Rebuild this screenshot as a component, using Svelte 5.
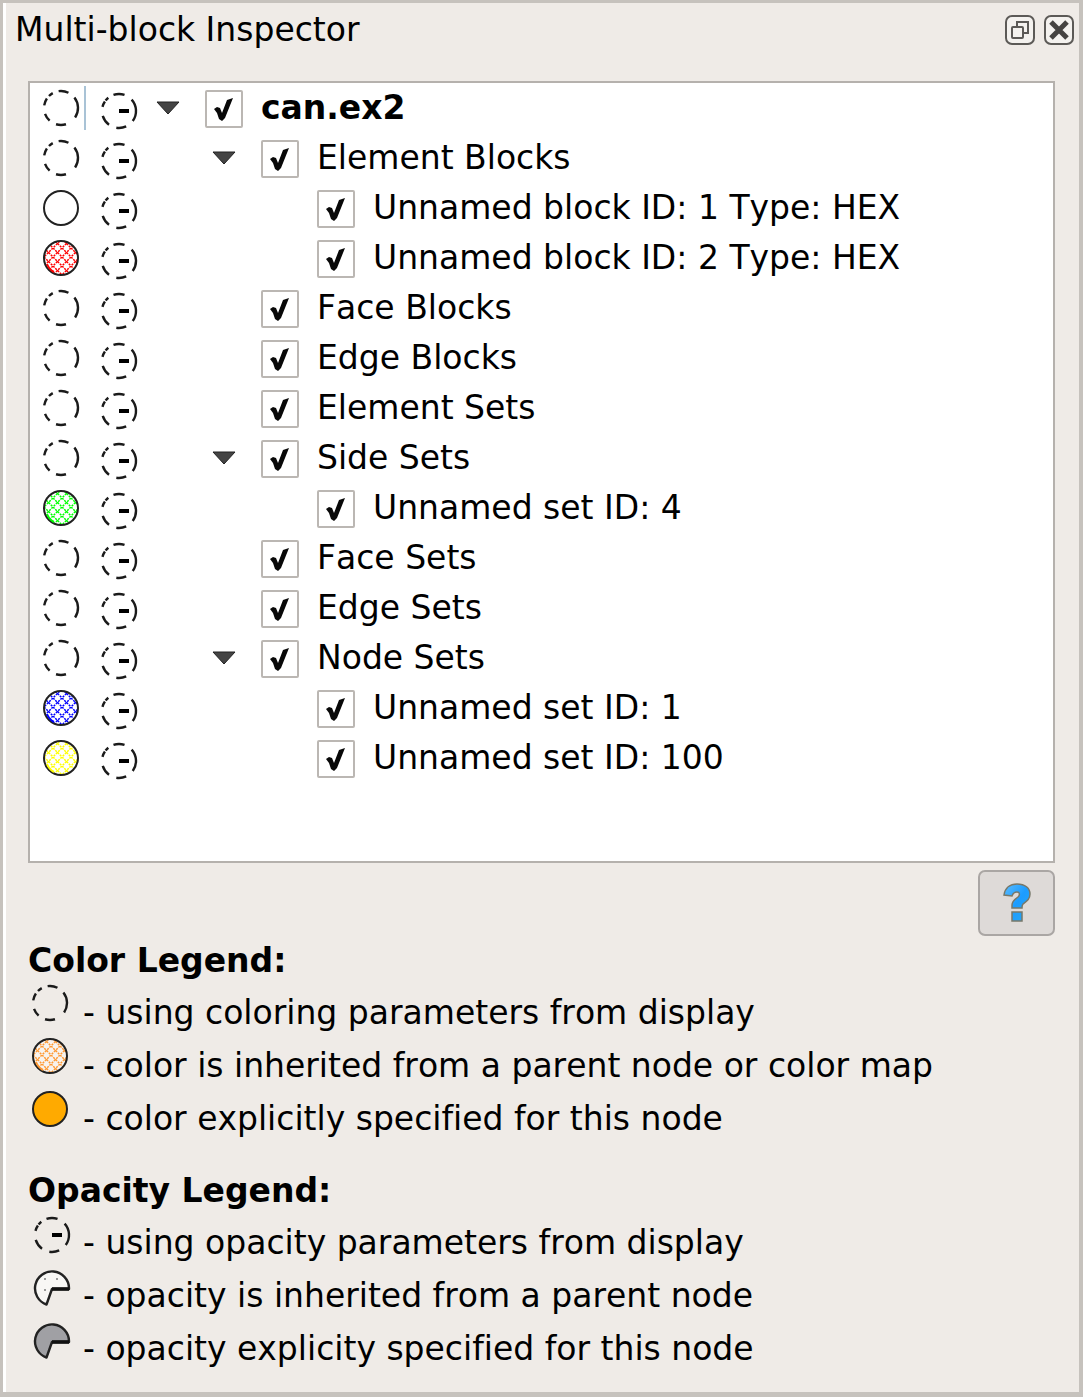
<script>
  let rows = $state([
    { label: 'can.ex2', depth: 0, open: true, checked: true, color: 'none', root: true },
    { label: 'Element Blocks', depth: 1, open: true, checked: true, color: 'none' },
    { label: 'Unnamed block ID: 1 Type: HEX', depth: 2, checked: true, color: '#ffffff' },
    { label: 'Unnamed block ID: 2 Type: HEX', depth: 2, checked: true, color: '#ff0000' },
    { label: 'Face Blocks', depth: 1, checked: true, color: 'none' },
    { label: 'Edge Blocks', depth: 1, checked: true, color: 'none' },
    { label: 'Element Sets', depth: 1, checked: true, color: 'none' },
    { label: 'Side Sets', depth: 1, open: true, checked: true, color: 'none' },
    { label: 'Unnamed set ID: 4', depth: 2, checked: true, color: '#00ff00' },
    { label: 'Face Sets', depth: 1, checked: true, color: 'none' },
    { label: 'Edge Sets', depth: 1, checked: true, color: 'none' },
    { label: 'Node Sets', depth: 1, open: true, checked: true, color: 'none' },
    { label: 'Unnamed set ID: 1', depth: 2, checked: true, color: '#0000ff' },
    { label: 'Unnamed set ID: 100', depth: 2, checked: true, color: '#ffff00' }
  ]);

  // A row is shown when every ancestor above it is open.
  const visible = $derived.by(() => {
    let limit = Infinity;
    return rows.filter((row) => {
      if (row.depth > limit) return false;
      limit = row.open === false ? row.depth : Infinity;
      return true;
    });
  });

  function arcs(list) {
    const at = (deg) => {
      const t = (deg * Math.PI) / 180;
      return `${(20 + 17 * Math.cos(t)).toFixed(2)} ${(20 + 17 * Math.sin(t)).toFixed(2)}`;
    };
    return list.map(([a, b]) => `M${at(a)}A17 17 0 0 1 ${at(b)}`).join('');
  }

  const colorDashes = arcs([[-38, 34], [73, 107], [132, 160], [189, 214], [225, 241], [262, 296]]);
  const opacityDashes = arcs([[-42, 36], [65, 99], [126, 163], [194, 214], [218, 231], [251, 289]]);
  const pie = 'M37 20A17 17 0 1 0 14.500 36.500L20 21H37Z';
</script>

{#snippet colorIcon(color, solid)}
  <svg class="icon" viewBox="0 0 40 40" aria-hidden="true">
    {#if color === 'none'}
      <path class="dash" d={colorDashes} />
    {:else if solid || color === '#ffffff'}
      <circle class="ring" cx="20" cy="20" r="17" fill={color} />
    {:else}
      {@const id = 'hatch' + color.slice(1)}
      <defs>
        <pattern {id} width="9" height="9" x="3" y="1" patternUnits="userSpaceOnUse">
          <path d="M0 0L9 9M9 0L0 9" stroke={color} stroke-width="1.500" stroke-dasharray="2.200 1" />
        </pattern>
      </defs>
      <circle class="back" cx="20" cy="20" r="17" />
      <circle class="ring" cx="20" cy="20" r="17" fill={`url(#${id})`} />
      <path d="M6 26A15.500 15.500 0 0 0 13 34" fill="none" stroke={color} stroke-width="2" />
    {/if}
  </svg>
{/snippet}

{#snippet opacityIcon(kind)}
  <svg class="icon" viewBox="0 0 40 40" aria-hidden="true">
    {#if kind === 'display'}
      <path class="dash" d={opacityDashes} />
      <path d="M20 20H30" stroke="#000" stroke-width="4" />
    {:else if kind === 'inherited'}
      <path class="pie" d={pie} fill="#f8f7f5" />
      <path class="notch" d="M20 21H37" />
      <path d="M12 11h2M24 11h2M12 22h2" stroke="#999" stroke-width="2" />
    {:else}
      <path class="pie" d={pie} fill="#a0a0a4" />
      <path class="notch" d="M20 21H37" />
    {/if}
  </svg>
{/snippet}

<main class="inspector">
  <header class="titlebar">
    <h1>Multi-block Inspector</h1>
    <div class="window-buttons">
      <button aria-label="Float panel">
        <svg viewBox="0 0 32 32" aria-hidden="true">
          <rect class="frame" x="2" y="2" width="28" height="28" rx="6" />
          <path class="line" d="M13 13V8H24V19H19" />
          <rect class="line" x="8" y="13" width="11" height="11" rx="1" />
        </svg>
      </button>
      <button aria-label="Close panel">
        <svg viewBox="0 0 32 32" aria-hidden="true">
          <rect class="frame" x="2" y="2" width="28" height="28" rx="6" />
          <path class="cross" d="M8 8L24 24M24 8L8 24" />
        </svg>
      </button>
    </div>
  </header>

  <section class="content">
    <ul class="tree" role="tree" aria-label="Blocks">
      {#each visible as row (row)}
        <li role="treeitem" aria-level={row.depth + 1} aria-expanded={row.open} aria-selected="false">
          <button class="color-cell" class:current={row.root} aria-label="Set color of {row.label}">
            {@render colorIcon(row.color, false)}
          </button>
          <button class="opacity-cell" aria-label="Set opacity of {row.label}">
            {@render opacityIcon('display')}
          </button>
          <span class="branch depth-{row.depth}">
            {#if row.open !== undefined}
              <button class="toggle" class:closed={!row.open} aria-label="Toggle {row.label}" onclick={() => (row.open = !row.open)}>
                <svg viewBox="0 0 26 14" aria-hidden="true">
                  <path d="M2 1H24L13 13Z" fill="#444" stroke="#222" />
                </svg>
              </button>
            {/if}
          </span>
          <label class:root={row.root}>
            <input type="checkbox" bind:checked={row.checked} />
            <span>{row.label}</span>
          </label>
        </li>
      {/each}
    </ul>

    <button class="help" aria-label="Help">
      <svg viewBox="0 0 30 42" aria-hidden="true">
        <defs>
          <linearGradient id="blue" x1="0" y1="0" x2="1" y2="1">
            <stop offset="0" stop-color="#5bbcff" />
            <stop offset="0.500" stop-color="#1c9cff" />
            <stop offset="1" stop-color="#28a8f4" />
          </linearGradient>
        </defs>
        <path
          d="M2 13C3 6 8 2 15 2C23 2 28 6 28 12C28 17 25 19 21 22C20 23 20 24 20 26H10V23C10 19 13 17 16 15C18 13 18 10 15 10C12 10 11 11 10 14ZM10 30H20V39H10Z"
          fill="url(#blue)"
          stroke="#77786a"
          stroke-width="1.500"
        />
      </svg>
    </button>

    <section class="legend">
      <h2>Color Legend:</h2>
      <ul>
        <li>{@render colorIcon('none', false)}<span>- using coloring parameters from display</span></li>
        <li>{@render colorIcon('#ff9933', false)}<span>- color is inherited from a parent node or color map</span></li>
        <li>{@render colorIcon('#ffaa00', true)}<span>- color explicitly specified for this node</span></li>
      </ul>
    </section>

    <section class="legend opacity">
      <h2>Opacity Legend:</h2>
      <ul>
        <li>{@render opacityIcon('display')}<span>- using opacity parameters from display</span></li>
        <li>{@render opacityIcon('inherited')}<span>- opacity is inherited from a parent node</span></li>
        <li>{@render opacityIcon('explicit')}<span>- opacity explicity specified for this node</span></li>
      </ul>
    </section>
  </section>
</main>

<style>
  :global(body) {
    margin: 0;
    background: #efebe7;
  }

  .inspector {
    box-sizing: border-box;
    min-height: 100vh;
    display: flex;
    flex-direction: column;
    border: solid #c6c2bd;
    border-width: 3px 4px 5px 3px;
    box-shadow: inset 3px 0 #fff;
    background: #efebe7;
    color: #000;
    font-family: 'DejaVu Sans', sans-serif;
    font-size: 33px;
    font-kerning: none;
    font-variant-ligatures: none;
    line-height: 50px;
  }

  h1,
  h2,
  ul {
    margin: 0;
    padding: 0;
    font-size: inherit;
    list-style: none;
  }

  button {
    margin: 0;
    padding: 0;
    border: 0;
    background: none;
  }

  svg {
    display: block;
  }

  .titlebar {
    display: flex;
    align-items: center;
    justify-content: space-between;
    padding: 2px 4px 26px 12px;
  }

  h1 {
    font-weight: 400;
  }

  .window-buttons {
    display: flex;
    gap: 7px;
  }

  .window-buttons svg {
    width: 32px;
    height: 32px;
  }

  .frame {
    fill: #f4f2ef;
    stroke: #5c5a57;
    stroke-width: 2;
  }

  .line {
    fill: #f4f2ef;
    stroke: #5c5a57;
    stroke-width: 2;
  }

  .cross {
    stroke: #454341;
    stroke-width: 5;
  }

  .content {
    flex: 1;
    display: flex;
    flex-direction: column;
    padding: 0 24px 17px 25px;
  }

  .tree {
    flex: 1;
    border: 2px solid #b5b1ad;
    background: #fff;
  }

  .tree li {
    display: flex;
    align-items: center;
    height: 50px;
  }

  .icon {
    flex: none;
    width: 40px;
    height: 40px;
  }

  .color-cell {
    box-sizing: border-box;
    width: 56px;
    height: 44px;
    padding-left: 11px;
    border-right: 2px solid transparent;
  }

  .color-cell.current {
    border-color: #a9c3d6;
  }

  .opacity-cell {
    width: 58px;
    padding: 5px 0 0 13px;
  }

  .dash {
    fill: none;
    stroke: #1a1a1a;
    stroke-width: 2.4;
  }

  .ring {
    stroke: #222;
    stroke-width: 2;
  }

  .back {
    fill: #fff;
  }

  .pie {
    stroke: #222;
    stroke-width: 2.4;
    stroke-linejoin: round;
  }

  .notch {
    stroke: #111;
    stroke-width: 3.6;
  }

  .branch {
    display: flex;
    justify-content: flex-end;
    box-sizing: border-box;
    padding-right: 24px;
  }

  .depth-0 {
    width: 61px;
  }

  .depth-1 {
    width: 117px;
  }

  .depth-2 {
    width: 173px;
  }

  .toggle svg {
    width: 26px;
    height: 14px;
  }

  .closed svg {
    transform: rotate(-90deg);
  }

  label {
    display: flex;
    align-items: center;
    gap: 18px;
    white-space: nowrap;
  }

  .root {
    font-weight: 700;
  }

  input {
    appearance: none;
    box-sizing: border-box;
    width: 38px;
    height: 38px;
    margin: 2px 0 0;
    border: 2px solid #bbb7b3;
    border-radius: 2px;
    background: #fff;
  }

  input:checked::before {
    content: '';
    display: block;
    width: 34px;
    height: 34px;
    background: #080808;
    clip-path: polygon(7px 17px, 10px 15px, 13px 16px, 15px 21px, 20px 8px, 26px 6px, 18px 26px, 15px 29px, 12px 27px, 10px 21px);
  }

  .help {
    align-self: flex-end;
    display: flex;
    align-items: center;
    justify-content: center;
    box-sizing: border-box;
    width: 77px;
    height: 66px;
    margin-top: 7px;
    border: 2px solid #aaa6a4;
    border-radius: 7px;
    background: #dedad8;
  }

  .help svg {
    width: 30px;
    height: 42px;
  }

  .legend h2 {
    line-height: 50px;
  }

  .opacity {
    margin-top: 21px;
  }

  .legend li {
    display: flex;
    height: 53px;
    line-height: 53px;
  }

  .legend li .icon {
    margin: -3px 13px 0 2px;
  }

  .legend.opacity li .icon {
    margin: -1px 11px 0 4px;
  }

  .legend .back {
    fill: #f7f3ef;
  }
</style>
